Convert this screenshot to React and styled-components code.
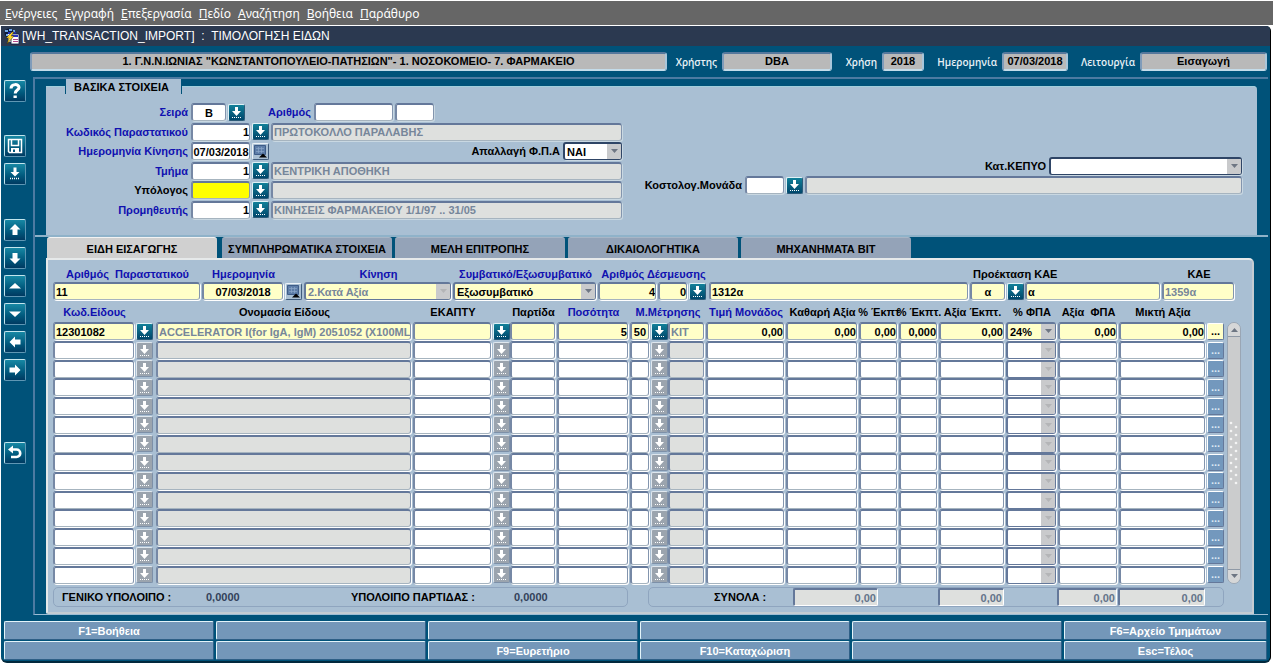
import { useState } from 'react';
import styled, { createGlobalStyle, css } from 'styled-components';

const GlobalStyle = createGlobalStyle`
  * {
    box-sizing: border-box;
  }

  body {
    margin: 0;
    background: #fff;
    font-family: 'Liberation Sans', Arial, sans-serif;
    font-size: 11px;
    font-weight: bold;
    color: #000;
  }

  button, input, select {
    font: inherit;
    color: inherit;
    margin: 0;
    padding: 0;
  }

  button {
    cursor: pointer;
  }
`;

const MenuBar = styled.nav`
  display: flex;
  align-items: center;
  gap: 7px;
  height: 24px;
  margin: 1px 0;
  padding: 0 5px;
  background: #666;
`;

const MenuItem = styled.button`
  border: none;
  background: none;
  color: #fff;
  font-family: 'Noto Sans', sans-serif;
  font-size: 12px;
  font-weight: normal;

  &::first-letter {
    text-decoration: underline;
  }
`;

const Window = styled.div`
  margin: 0 2px 0 1px;
  background: #005279;
  border-right: 1px solid #000;
  border-bottom: 2px solid #02293d;
  border-radius: 0 5px 6px 6px;
  overflow: hidden;
`;

const TitleBar = styled.header`
  display: flex;
  align-items: center;
  gap: 2px;
  height: 20px;
  padding-left: 3px;
  background: #2b3950;
  color: #fff;
  font-size: 12px;
  font-weight: normal;
  white-space: pre;
`;

const StatusRow = styled.div`
  display: flex;
  align-items: center;
  height: 31px;
  padding: 0 3px 0 29px;
`;

const StatusLabel = styled.span`
  flex: none;
  width: ${(props) => props.$width}px;
  padding-right: 5px;
  color: #e8f1f6;
  font-family: 'Open Sans', sans-serif;
  font-size: 10px;
  font-weight: 600;
  text-align: right;
`;

const StatusBox = styled.output`
  display: block;
  flex: ${(props) => (props.$width ? 'none' : '1')};
  width: ${(props) => (props.$width ? `${props.$width}px` : 'auto')};
  height: 19px;
  line-height: 15px;
  border: 2px solid;
  border-color: #56789c #a9c6da #c4dcea #7f9cba;
  border-radius: 3px;
  background: #b9b9b9;
  text-align: center;
  white-space: nowrap;
  overflow: hidden;
`;

const Body = styled.div`
  display: flex;
`;

const ToolBar = styled.aside`
  display: flex;
  flex-direction: column;
  gap: 6px;
  width: 32px;
  padding: 3px 0 0 3px;
`;

const ToolButton = styled.button`
  display: flex;
  align-items: center;
  justify-content: center;
  width: 22px;
  height: 22px;
  margin-top: ${(props) => props.$space || 0}px;
  border: 1px solid;
  border-color: #c3e6ee #5f97b4 #5f97b4 #c3e6ee;
  border-radius: 2px;
  background: linear-gradient(#1788a4, #00587c 60%, #003a61);
`;

const Frame = styled.main`
  flex: 1;
  min-width: 0;
  border-left: 2px solid #4d7ba2;
  border-bottom: 1px solid #9dbdd4;
  margin-right: 2px;
`;

const TopBlock = styled.section`
  border-top: 2px solid #4d7ba2;
  border-bottom: 2px solid #8fb2c9;
  padding: 0 11px;
`;

const Fieldset = styled.fieldset`
  display: flex;
  height: 156px;
  margin: 0;
  padding: 9px 15px 18px 17px;
  border: 0;
  border-top: 1px solid #a2cfdc;
  border-radius: 0 4px 0 0;
  background: #a9bfd3;
`;

const Legend = styled.legend`
  height: 15px;
  line-height: 16px;
  margin-left: 2px;
  padding: 0 12px 0 8px;
  border: 1px solid #005279;
  border-width: 0 1px;
  background: #a9bfd3;
  font-weight: bold;
`;

const FormSide = styled.div`
  display: flex;
  flex-direction: column;
  justify-content: space-between;
  flex: 559 1 0;
  min-width: 0;
  height: 116px;
`;

const RightSide = styled.div`
  display: flex;
  flex-direction: column;
  flex: 602 1 0;
  min-width: 0;
  padding: 54px 0 0;
  margin-left: 18px;
  gap: 1px;
`;

const FormRow = styled.div`
  display: flex;
  align-items: center;
  gap: 2px;
  height: 18px;
`;

const Label = styled.label`
  flex: none;
  width: ${(props) => (props.$width ? `${props.$width}px` : 'auto')};
  margin-right: 1px;
  margin-left: ${(props) => props.$push || 0};
  color: ${(props) => (props.$blue ? '#1010b0' : '#000')};
  text-align: right;
  white-space: pre;
`;

const fieldFrame = css`
  height: 18px;
  border: 1px solid;
  border-width: 2px 1px 1px 2px;
  border-color: #64789a #8395ae #a6b4bf #7688a5;
  border-radius: 3px;
  box-shadow: 1px 1px 0 ${(props) => (props.$grid ? '#fff' : '#c9d8e2')};
`;

const tones = {
  white: '#fff',
  grey: '#dee0de',
  cream: '#ffffc8',
  yellow: '#ff0',
};

const Field = styled.input`
  ${fieldFrame}
  display: block;
  flex: ${(props) => (props.$width ? 'none' : '1')};
  width: ${(props) => (props.$width ? `${props.$width}px` : '100%')};
  min-width: 0;
  padding: ${(props) => (props.$align ? '0' : '0 0 0 1px')};
  background: ${(props) => tones[props.$tone || 'white']};
  color: ${(props) => (props.$dim ? '#76869a' : '#000')};
  text-align: ${(props) => props.$align || 'left'};
  outline: none;
`;

const SelectFrame = styled.span`
  ${fieldFrame}
  display: flex;
  flex: none;
  width: ${(props) => (props.$width ? `${props.$width}px` : '100%')};
  border-color: ${(props) => (props.$grid ? '#64789a' : '#2f4566')};
  background: ${(props) => tones[props.$tone || 'white']};
  overflow: hidden;
`;

const SelectControl = styled.select`
  flex: 1;
  width: 0;
  padding-left: 2px;
  border: none;
  outline: none;
  appearance: none;
  background: transparent;
  color: ${(props) => (props.$dim ? '#76869a' : '#000')};
  opacity: 1;
`;

const SelectArrow = styled.span`
  display: flex;
  align-items: center;
  justify-content: center;
  width: 14px;
  background: #c9cacc;
`;

const LovButton = styled.button`
  display: flex;
  align-items: center;
  justify-content: center;
  flex: none;
  width: 17px;
  height: 17px;
  border: 1px solid;
  border-color: ${(props) => (props.$idle ? '#dfe7ee #7d90a8 #7d90a8 #dfe7ee' : '#e0f2f6 #2b5a78 #2b5a78 #e0f2f6')};
  border-radius: 2px;
  background: ${(props) => (props.$idle ? '#9ba4ae' : 'linear-gradient(#128099, #00466b)')};
`;

const CalendarButton = styled(LovButton)`
  border-color: #edf3f8 #3f5b7c #3f5b7c #edf3f8;
  background: #a9bfd3;
`;

const Tabs = styled.div`
  display: flex;
  gap: 3px;
  padding-left: 12px;
`;

const Tab = styled.button`
  width: 170px;
  height: 21px;
  padding-top: 2px;
  border: none;
  border-top: 1px solid ${(props) => (props.$active ? '#f2f2f2' : '#a8b6c6')};
  border-radius: 3px 3px 0 0;
  background: ${(props) => (props.$active ? '#d0d0d0' : '#94a3b8')};
  white-space: nowrap;

  &:first-child {
    margin-right: 2px;
  }
`;

const TabPanel = styled.section`
  margin: 0 14px 0 11px;
  padding: 5px 11px 5px 5px;
  border: 2px solid;
  border-color: #e6e9ea #c4ccd2 #c4ccd2 #e6e9ea;
  border-radius: 0 5px 0 2px;
  background: #a9bfd3;
`;

const DocumentGrid = styled.div`
  display: grid;
  grid-template-columns: 149px 83px 19px 149px 145px 60px 31px 20px minmax(0, 1fr) 37px 18px 137px 74px;
  grid-template-rows: 17px 18px;
  align-items: center;
  padding-right: 5px;

  & > input,
  & > span {
    width: calc(100% - 2px);
  }
`;

const GridLabel = styled.label`
  grid-column: span ${(props) => props.$span || 1};
  padding-left: ${(props) => (props.$align ? 3 : 0)}px;
  color: ${(props) => (props.$blue ? '#1010b0' : '#000')};
  text-align: ${(props) => props.$align || 'center'};
  white-space: pre;
`;

const ItemsArea = styled.div`
  display: flex;
  gap: 2px;
`;

const ItemsTable = styled.table`
  flex: 1;
  width: 0;
  height: 284px;
  table-layout: fixed;
  border-collapse: collapse;
`;

const Cell = styled.td`
  padding: 0 ${(props) => (props.$flush ? 0 : 2)}px 0 0;
`;

const HeadCell = styled.th`
  height: 22px;
  padding: 4px 0 0;
  color: ${(props) => (props.$blue ? '#1010b0' : '#000')};
  line-height: 16px;
  vertical-align: top;
  white-space: pre;

  & > span {
    display: flex;
    justify-content: center;
    margin: 0 -6px;
  }
`;

const MoreButton = styled.button`
  display: block;
  width: 17px;
  height: 17px;
  border: 1px solid;
  border-color: #fff #64789a #64789a #fff;
  border-radius: 2px;
  background: ${(props) => (props.$active ? '#ffffc8' : '#7398bd')};
  color: ${(props) => (props.$active ? '#000' : '#dbe8f4')};
  line-height: 15px;
`;

const ScrollBar = styled.div`
  display: flex;
  flex-direction: column;
  width: 14px;
  margin-top: 22px;
  border: 1px solid #9aa6b4;
  border-radius: 7px;
  background: #cbcccd;
  overflow: hidden;
`;

const ScrollTrack = styled.div`
  flex: 1;
  display: flex;
  align-items: center;
  justify-content: center;
  border: 1px solid #8f99a6;
  border-width: 1px 0;
`;

const ScrollButton = styled.button`
  display: flex;
  align-items: center;
  justify-content: center;
  height: 13px;
  border: none;
  background: #d6d7d8;
`;

const Totals = styled.div`
  display: flex;
  gap: 20px;
  margin-top: 3px;
  padding-right: 17px;
`;

const TotalsBox = styled.div`
  display: flex;
  align-items: center;
  flex: ${(props) => (props.$width ? 'none' : '1')};
  width: ${(props) => (props.$width ? `${props.$width}px` : 'auto')};
  height: 20px;
  padding: 0 17px 0 8px;
  border: 1px solid #8fa5bf;
  border-radius: 5px;
`;

const TotalText = styled.label`
  flex: none;
  width: ${(props) => (props.$width ? `${props.$width}px` : 'auto')};
  margin-left: ${(props) => props.$gap || 0}px;
  white-space: nowrap;
`;

const Balance = styled.output`
  width: ${(props) => props.$width || 34}px;
  color: #33415a;
`;

const Sum = styled.output`
  width: ${(props) => props.$width}px;
  height: 18px;
  margin-left: ${(props) => props.$gap || 0}px;
  padding-right: 1px;
  border: 1px solid;
  border-width: 2px 1px 1px 2px;
  border-color: #64789a #fff #fff #64789a;
  border-radius: 2px;
  background: #dee0de;
  color: #64748a;
  line-height: 16px;
  text-align: right;
`;

const KeyGrid = styled.footer`
  display: grid;
  grid-template-columns: repeat(5, 210fr) 203fr;
  gap: 1px 2px;
  padding: 6px 3px 1px 3px;
`;

const KeyButton = styled.button`
  height: 19px;
  border: 1px solid;
  border-color: #e4f4fa #2f5f86 #2f5f86 #e4f4fa;
  border-radius: 2px;
  background: #7497b9;
  color: #fff;
`;

const DownLineIcon = () => (
  <svg width="15" height="15" viewBox="0 0 15 15">
    <path d="M6 2h3v4h3l-4.500 5L3 6h3z" fill="#fff" />
    <path d="M3 12.500h9" stroke="#fff" strokeDasharray="1 1" />
  </svg>
);

const CalendarIcon = () => (
  <svg width="15" height="15" viewBox="0 0 15 15">
    <path d="M1.500 1.500h11v9h-11z" fill="#5d7da8" stroke="#3e5c88" />
    <path d="M3 4.500h8M3 7.500h8M5.500 3v6M8.500 3v6" stroke="#8ba6c8" strokeWidth="0.700" />
    <path d="M6 13.500l4-4 4 4z" fill="#000" />
  </svg>
);

const Triangle = ({ up, color = '#6e7683' }) => (
  <svg width="9" height="5" viewBox="0 0 9 5">
    <path d={up ? 'M1 5L4.500 1 8 5z' : 'M1 0h7L4.500 4z'} fill={color} />
  </svg>
);

const AppIcon = () => (
  <svg width="16" height="17" viewBox="0 0 16 17">
    <circle cx="5" cy="5" r="4.500" fill="#0b1a3a" />
    <path d="M1 2h3v2H1zM5 1h3v2H5zM9 2h2v2H9zM2 6h2v2H2z" fill="#6fa8e8" />
    <path d="M4 4h8v2H4z" fill="#2234b8" />
    <path d="M4 6h8v8H4z" fill="#f1f2f7" />
    <path d="M7 6h8v10H7z" fill="#fff" stroke="#0d1a45" strokeWidth="0.800" />
    <path d="M8 7h6v2H8z" fill="#2a36c0" />
    <path d="M9 11.500h5M9 13.500h5" stroke="#b3478a" />
    <path d="M8 4L2 10h3l-2 6 7-8H7l3-4z" fill="#ffd92e" stroke="#3d2d00" strokeWidth="0.500" />
  </svg>
);

const toolIcons = {
  help: (
    <>
      <path d="M5 6.500c0-5 8-5 8-1 0 2.700-3.800 2.500-3.800 6" fill="none" stroke="#fff" strokeWidth="3" />
      <path d="M7.500 13.500h3.300V16H7.500z" fill="#fff" />
    </>
  ),
  save: (
    <>
      <path d="M2.500 2.500h13v13h-12l-1-1zM5.500 2.500v6h7v-6" fill="none" stroke="#fff" strokeWidth="1.500" />
      <path d="M5 11h8v5H5z" fill="#fff" />
      <path d="M7 12.500h2V15H7z" fill="#00587c" />
    </>
  ),
  fetch: (
    <>
      <path d="M7.500 2.500h3v4.500h3L9 11.500 4.500 7h3z" fill="#fff" />
      <path d="M4 13.500h10" stroke="#fff" strokeWidth="1.300" strokeDasharray="1 1" />
    </>
  ),
  up: <path d="M9 3l5.500 5.500H11.500V14h-5V8.500h-3z" fill="#fff" />,
  down: <path d="M9 15l5.500-5.500H11.500V4h-5v5.500h-3z" fill="#fff" />,
  pageUp: <path d="M3 11.500L9 6l6 5.500z" fill="#fff" />,
  pageDown: <path d="M3 6.500L9 12l6-5.500z" fill="#fff" />,
  left: <path d="M3.500 9L9 3.500v3h5.500v5H9v3z" fill="#fff" />,
  right: <path d="M14.500 9L9 3.500v3H3.500v5H9v3z" fill="#fff" />,
  back: (
    <>
      <path d="M6 5.500h4.500a3.500 3.500 0 0 1 0 7.500H5" fill="none" stroke="#fff" strokeWidth="2.600" />
      <path d="M2 5.500l5-4v8z" fill="#fff" />
    </>
  ),
};

const tools = [
  { icon: 'help', label: 'Βοήθεια' },
  { icon: 'save', label: 'Αποθήκευση', space: 27 },
  { icon: 'fetch', label: 'Λίστα τιμών' },
  { icon: 'up', label: 'Προηγούμενο μπλοκ', space: 28 },
  { icon: 'down', label: 'Επόμενο μπλοκ' },
  { icon: 'pageUp', label: 'Προηγούμενη εγγραφή' },
  { icon: 'pageDown', label: 'Επόμενη εγγραφή' },
  { icon: 'left', label: 'Προηγούμενο πεδίο' },
  { icon: 'right', label: 'Επόμενο πεδίο' },
  { icon: 'back', label: 'Έξοδος', space: 55 },
];

const menus = ['Ενέργειες', 'Εγγραφή', 'Επεξεργασία', 'Πεδίο', 'Αναζήτηση', 'Βοήθεια', 'Παράθυρο'];

const tabNames = ['ΕΙΔΗ ΕΙΣΑΓΩΓΗΣ', 'ΣΥΜΠΛΗΡΩΜΑΤΙΚΑ ΣΤΟΙΧΕΙΑ', 'ΜΕΛΗ ΕΠΙΤΡΟΠΗΣ', 'ΔΙΚΑΙΟΛΟΓΗΤΙΚΑ', 'ΜΗΧΑΝΗΜΑΤΑ ΒΙΤ'];

const keys = [
  'F1=Βοήθεια', '', '', '', '', 'F6=Αρχείο Τμημάτων',
  '', '', 'F9=Ευρετήριο', 'F10=Καταχώριση', '', 'Esc=Τέλος',
];

const columns = [
  { width: 83, name: 'Κωδ.Είδους', value: '12301082' },
  { width: 20, kind: 'lov', name: 'Κωδ.Είδους' },
  { name: 'Ονομασία Είδους', value: 'ACCELERATOR I(for IgA, IgM) 2051052 (X100ML', readOnly: true },
  { width: 80, name: 'ΕΚΑΠΤΥ', value: '' },
  { width: 17, kind: 'lov', name: 'ΕΚΑΠΤΥ' },
  { width: 47, name: 'Παρτίδα', value: '' },
  { width: 73, name: 'Ποσότητα', value: '5', align: 'right' },
  { width: 21, name: 'Μ.Μέτρησης', value: '50', align: 'center' },
  { width: 17, kind: 'lov', name: 'Μ.Μέτρησης' },
  { width: 38, name: 'Μ.Μέτρησης', value: 'KIT', readOnly: true },
  { width: 80, name: 'Τιμή Μονάδος', value: '0,00', align: 'right' },
  { width: 73, name: 'Καθαρή Αξία', value: '0,00', align: 'right' },
  { width: 40, name: '% Έκπτ', value: '0,00', align: 'right' },
  { width: 40, name: '% Έκπτ.', value: '0,000', align: 'right' },
  { width: 67, name: 'Αξία Έκπτ.', value: '0,00', align: 'right' },
  { width: 52, kind: 'select', name: '% ΦΠΑ', value: '24%' },
  { width: 61, name: 'Αξία ΦΠΑ', value: '0,00', align: 'right' },
  { width: 88, name: 'Μικτή Αξία', value: '0,00', align: 'right' },
  { width: 18, kind: 'more', name: 'Λεπτομέρειες' },
];

const headings = [
  { text: 'Κωδ.Είδους', blue: true },
  { text: '' },
  { text: 'Ονομασία Είδους' },
  { text: 'ΕΚΑΠΤΥ' },
  { text: '' },
  { text: 'Παρτίδα' },
  { text: 'Ποσότητα', blue: true },
  { text: 'Μ.Μέτρησης', blue: true, span: 3 },
  { text: 'Τιμή Μονάδος', blue: true },
  { text: 'Καθαρή Αξία' },
  { text: '% Έκπτ' },
  { text: '% Έκπτ.' },
  { text: 'Αξία Έκπτ.' },
  { text: '% ΦΠΑ' },
  { text: 'Αξία  ΦΠΑ' },
  { text: 'Μικτή Αξία' },
  { text: '' },
];

const Select = ({ id, label, value, width, tone, dim, grid, idle }) => (
  <SelectFrame $width={width} $tone={tone} $grid={grid}>
    <SelectControl id={id} aria-label={label} defaultValue={value} disabled={idle} $dim={dim}>
      <option>{value}</option>
    </SelectControl>
    <SelectArrow>
      <Triangle color={idle ? '#b4b5b7' : undefined} />
    </SelectArrow>
  </SelectFrame>
);

const Lov = ({ name, idle }) => (
  <LovButton type="button" aria-label={`Λίστα ${name}`} $idle={idle}>
    <DownLineIcon />
  </LovButton>
);

const ItemCell = ({ column, active }) => {
  if (column.kind === 'lov') {
    return <Lov name={column.name} idle={!active} />;
  }
  if (column.kind === 'more') {
    return <MoreButton type="button" aria-label={column.name} $active={active}>...</MoreButton>;
  }
  if (column.kind === 'select') {
    return (
      <Select
        label={column.name}
        value={active ? column.value : ''}
        tone={active ? 'cream' : 'white'}
        idle={!active}
        grid
      />
    );
  }
  const emptyTone = column.readOnly ? 'grey' : 'white';
  return (
    <Field
      aria-label={column.name}
      defaultValue={active ? column.value : ''}
      readOnly={column.readOnly}
      $tone={active ? 'cream' : emptyTone}
      $dim={column.readOnly}
      $align={column.align}
      $grid
    />
  );
};

const BasicForm = () => (
  <Fieldset>
    <Legend>ΒΑΣΙΚΑ ΣΤΟΙΧΕΙΑ</Legend>
    <FormSide>
      <FormRow>
        <Label htmlFor="series" $width={125} $blue>Σειρά</Label>
        <Field id="series" defaultValue="B" $width={35} $align="center" />
        <Lov name="Σειρά" />
        <Label htmlFor="number" $width={64} $blue>Αριθμός</Label>
        <Field id="number" $width={79} />
        <Field aria-label="Αριθμός 2" $width={39} />
      </FormRow>
      <FormRow>
        <Label htmlFor="docCode" $width={125} $blue>Κωδικός Παραστατικού</Label>
        <Field id="docCode" defaultValue="1" $width={59} $align="right" />
        <Lov name="Κωδικός Παραστατικού" />
        <Field aria-label="Παραστατικό" defaultValue="ΠΡΩΤΟΚΟΛΛΟ ΠΑΡΑΛΑΒΗΣ" readOnly $tone="grey" $dim />
      </FormRow>
      <FormRow>
        <Label htmlFor="moveDate" $width={125} $blue>Ημερομηνία Κίνησης</Label>
        <Field id="moveDate" defaultValue="07/03/2018" $width={59} $align="center" />
        <CalendarButton type="button" aria-label="Ημερολόγιο"><CalendarIcon /></CalendarButton>
        <Label htmlFor="vatFree" $push="auto">Απαλλαγή Φ.Π.Α</Label>
        <Select id="vatFree" value="ΝΑΙ" width={59} />
      </FormRow>
      <FormRow>
        <Label htmlFor="department" $width={125} $blue>Τμήμα</Label>
        <Field id="department" defaultValue="1" $width={59} $align="right" />
        <Lov name="Τμήμα" />
        <Field aria-label="Όνομα τμήματος" defaultValue="ΚΕΝΤΡΙΚΗ ΑΠΟΘΗΚΗ" readOnly $tone="grey" $dim />
      </FormRow>
      <FormRow>
        <Label htmlFor="keeper" $width={125}>Υπόλογος</Label>
        <Field id="keeper" $width={59} $tone="yellow" />
        <Lov name="Υπόλογος" />
        <Field aria-label="Όνομα υπολόγου" readOnly $tone="grey" $dim />
      </FormRow>
      <FormRow>
        <Label htmlFor="supplier" $width={125} $blue>Προμηθευτής</Label>
        <Field id="supplier" defaultValue="1" $width={59} $align="right" />
        <Lov name="Προμηθευτής" />
        <Field aria-label="Όνομα προμηθευτή" defaultValue="ΚΙΝΗΣΕΙΣ ΦΑΡΜΑΚΕΙΟΥ 1/1/97 .. 31/05" readOnly $tone="grey" $dim />
      </FormRow>
    </FormSide>
    <RightSide>
      <FormRow>
        <Label htmlFor="kepyo" $push="auto">Κατ.ΚΕΠΥΟ</Label>
        <Select id="kepyo" value="" width={193} />
      </FormRow>
      <FormRow>
        <Label htmlFor="costUnit" $width={102}>Κοστολογ.Μονάδα</Label>
        <Field id="costUnit" $width={39} />
        <Lov name="Κοστολογ.Μονάδα" />
        <Field aria-label="Όνομα μονάδας" readOnly $tone="grey" $dim />
      </FormRow>
    </RightSide>
  </Fieldset>
);

const DocumentHeader = () => (
  <DocumentGrid>
    <GridLabel htmlFor="docNumber" $blue>Αριθμός  Παραστατικού</GridLabel>
    <GridLabel htmlFor="docDate" $blue>Ημερομηνία</GridLabel>
    <span />
    <GridLabel htmlFor="movement" $blue>Κίνηση</GridLabel>
    <GridLabel htmlFor="contract" $blue>Συμβατικό/Εξωσυμβατικό</GridLabel>
    <GridLabel htmlFor="binding" $span={3} $blue>Αριθμός Δέσμευσης</GridLabel>
    <span />
    <GridLabel htmlFor="kaeExt" $span={3} $align="left">Προέκταση ΚΑΕ</GridLabel>
    <GridLabel htmlFor="kae">ΚΑΕ</GridLabel>

    <Field id="docNumber" defaultValue="11" $tone="cream" $grid />
    <Field id="docDate" defaultValue="07/03/2018" $tone="cream" $align="center" $grid />
    <CalendarButton type="button" aria-label="Ημερολόγιο"><CalendarIcon /></CalendarButton>
    <Select id="movement" value="2.Κατά Αξία" tone="cream" grid dim idle />
    <Select id="contract" value="Εξωσυμβατικό" tone="cream" grid />
    <Field id="binding" defaultValue="4" $tone="cream" $align="right" $grid />
    <Field aria-label="Υποαριθμός δέσμευσης" defaultValue="0" $tone="cream" $align="right" $grid />
    <Lov name="Αριθμός Δέσμευσης" />
    <Field aria-label="Περιγραφή δέσμευσης" defaultValue="1312α" $tone="cream" $grid />
    <Field id="kaeExt" defaultValue="α" $tone="cream" $align="center" $grid />
    <Lov name="Προέκταση ΚΑΕ" />
    <Field aria-label="Περιγραφή προέκτασης" defaultValue="α" $tone="cream" $grid />
    <Field id="kae" defaultValue="1359α" readOnly $tone="cream" $dim $grid />
  </DocumentGrid>
);

const scrollDots = [];
for (let i = 0; i < 8; i++) {
  scrollDots.push({ x: 3, y: 3 + i * 8 }, { x: 8, y: 7 + i * 8 });
}

const Items = () => (
  <ItemsArea>
    <ItemsTable>
      <colgroup>
        {columns.map((column, i) => (
          <col key={i} width={column.width} />
        ))}
      </colgroup>
      <thead>
        <tr>
          {headings.map((heading, i) => (
            <HeadCell key={i} colSpan={heading.span} $blue={heading.blue}>
              <span>{heading.text}</span>
            </HeadCell>
          ))}
        </tr>
      </thead>
      <tbody>
        {Array.from({ length: 14 }, (_, row) => (
          <tr key={row}>
            {columns.map((column, i) => (
              <Cell key={i} $flush={column.kind === 'lov' || column.kind === 'more'}>
                <ItemCell column={column} active={row === 0} />
              </Cell>
            ))}
          </tr>
        ))}
      </tbody>
    </ItemsTable>
    <ScrollBar>
      <ScrollButton type="button" aria-label="Πάνω"><Triangle up /></ScrollButton>
      <ScrollTrack>
        <svg width="12" height="66" viewBox="0 0 12 66">
          {scrollDots.map((dot, i) => (
            <circle key={i} cx={dot.x} cy={dot.y} r="1.300" fill="#f4f4f4" />
          ))}
        </svg>
      </ScrollTrack>
      <ScrollButton type="button" aria-label="Κάτω"><Triangle /></ScrollButton>
    </ScrollBar>
  </ItemsArea>
);

const App = () => {
  const [activeTab, setActiveTab] = useState(0);

  return (
    <>
      <GlobalStyle />
      <MenuBar>
        {menus.map((menu) => (
          <MenuItem key={menu} type="button">{menu}</MenuItem>
        ))}
      </MenuBar>
      <Window>
        <TitleBar>
          <AppIcon />
          <span>[WH_TRANSACTION_IMPORT]  :  ΤΙΜΟΛΟΓΗΣΗ ΕΙΔΩΝ</span>
        </TitleBar>
        <StatusRow>
          <StatusBox>1. Γ.Ν.Ν.ΙΩΝΙΑΣ "ΚΩΝΣΤΑΝΤΟΠΟΥΛΕΙΟ-ΠΑΤΗΣΙΩΝ"- 1. ΝΟΣΟΚΟΜΕΙΟ- 7. ΦΑΡΜΑΚΕΙΟ</StatusBox>
          <StatusLabel $width={55}>Χρήστης</StatusLabel>
          <StatusBox $width={110}>DBA</StatusBox>
          <StatusLabel $width={50}>Χρήση</StatusLabel>
          <StatusBox $width={42}>2018</StatusBox>
          <StatusLabel $width={78}>Ημερομηνία</StatusLabel>
          <StatusBox $width={66}>07/03/2018</StatusBox>
          <StatusLabel $width={72}>Λειτουργία</StatusLabel>
          <StatusBox $width={127}>Εισαγωγή</StatusBox>
        </StatusRow>
        <Body>
          <ToolBar>
            {tools.map((tool) => (
              <ToolButton key={tool.icon} type="button" aria-label={tool.label} $space={tool.space}>
                <svg width="18" height="18" viewBox="0 0 18 18">{toolIcons[tool.icon]}</svg>
              </ToolButton>
            ))}
          </ToolBar>
          <Frame>
            <TopBlock>
              <BasicForm />
            </TopBlock>
            <Tabs role="tablist">
              {tabNames.map((name, i) => (
                <Tab
                  key={name}
                  type="button"
                  role="tab"
                  aria-selected={i === activeTab}
                  $active={i === activeTab}
                  onClick={() => setActiveTab(i)}
                >
                  {name}
                </Tab>
              ))}
            </Tabs>
            <TabPanel>
              <DocumentHeader />
              <Items />
              <Totals>
                <TotalsBox>
                  <TotalText $width={144}>ΓΕΝΙΚΟ ΥΠΟΛΟΙΠΟ :</TotalText>
                  <Balance $width={145}>0,0000</Balance>
                  <TotalText $width={163}>ΥΠΟΛΟΙΠΟ ΠΑΡΤΙΔΑΣ :</TotalText>
                  <Balance>0,0000</Balance>
                </TotalsBox>
                <TotalsBox $width={576}>
                  <TotalText $width={79} $gap={57}>ΣΥΝΟΛΑ :</TotalText>
                  <Sum $width={85}>0,00</Sum>
                  <Sum $width={66} $gap={60}>0,00</Sum>
                  <Sum $width={60} $gap={53}>0,00</Sum>
                  <Sum $width={87} $gap={1}>0,00</Sum>
                </TotalsBox>
              </Totals>
            </TabPanel>
          </Frame>
        </Body>
        <KeyGrid>
          {keys.map((text, i) => (
            <KeyButton key={i} type="button" aria-label={text || `Πλήκτρο ${i + 1}`}>{text}</KeyButton>
          ))}
        </KeyGrid>
      </Window>
    </>
  );
};

export default App;
